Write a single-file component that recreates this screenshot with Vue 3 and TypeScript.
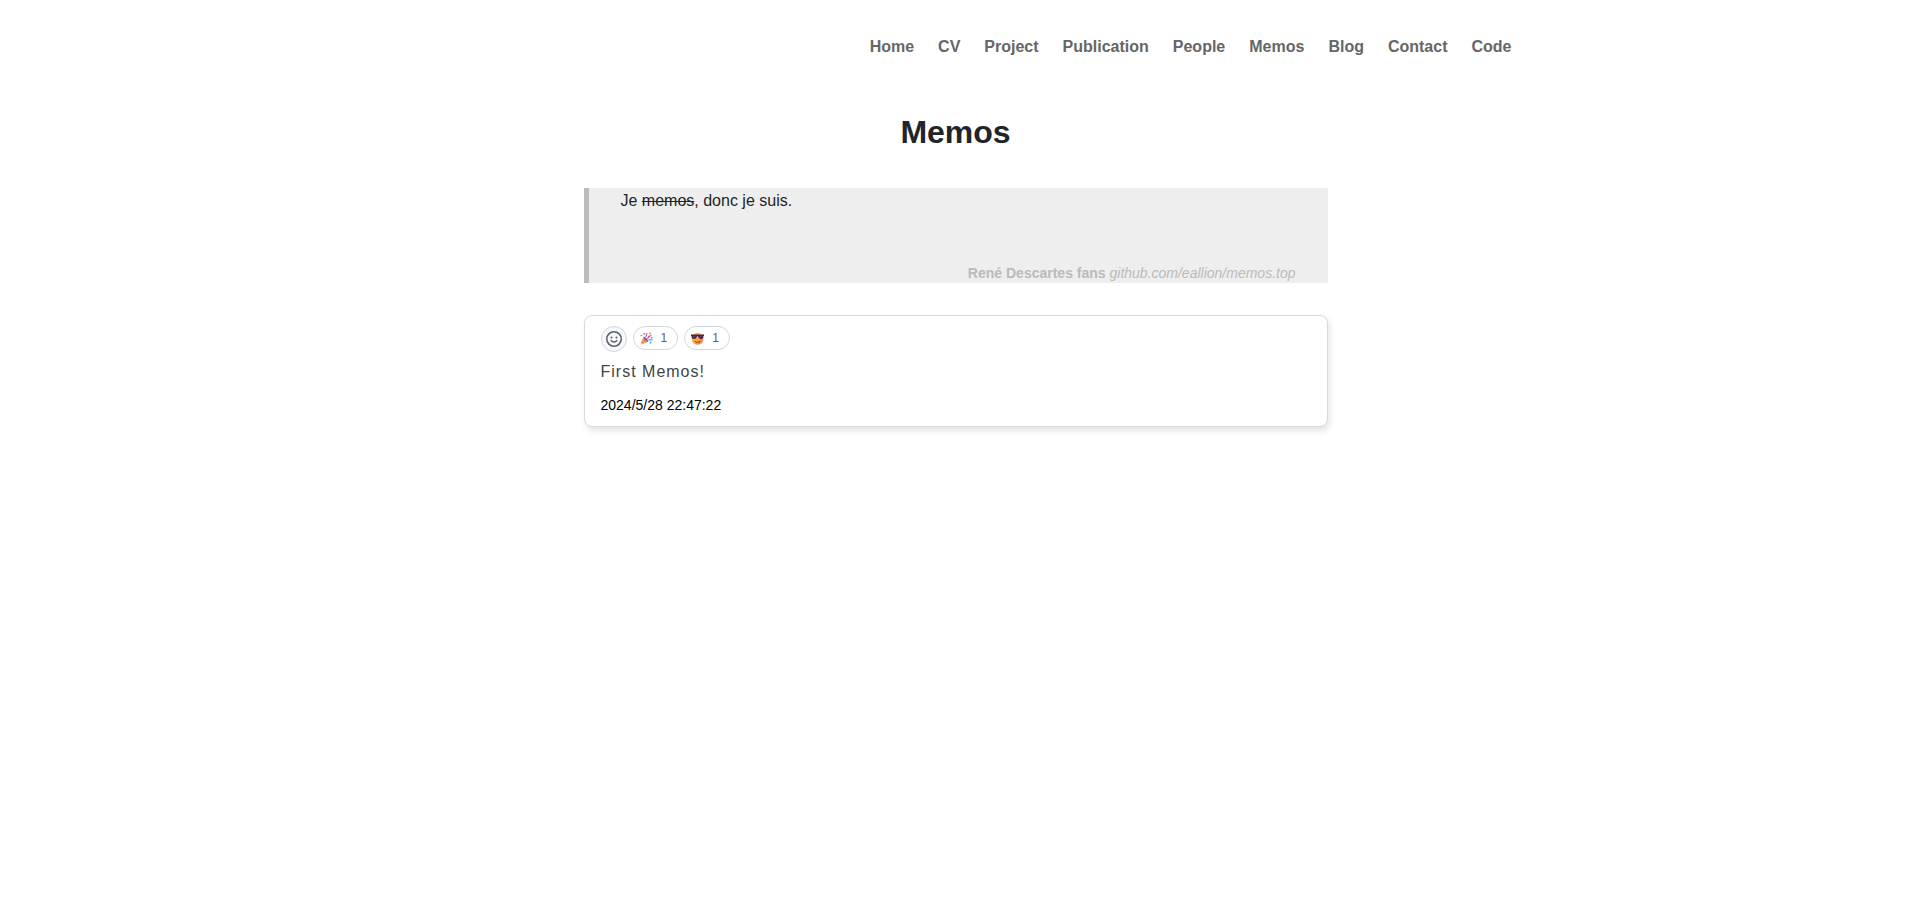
<script setup lang="ts">
interface Reaction {
  id: 'party' | 'cool'
  label: string
  count: number
}

const links: string[] = ['Home', 'CV', 'Project', 'Publication', 'People', 'Memos', 'Blog', 'Contact', 'Code']

const reactions: Reaction[] = [
  { id: 'party', label: 'Party popper', count: 1 },
  { id: 'cool', label: 'Smiling face with sunglasses', count: 1 },
]
</script>

<template>
  <div class="page">
    <header class="header">
      <nav class="nav" aria-label="Main">
        <a v-for="link in links" :key="link" class="nav-link" :href="'#' + link.toLowerCase()">{{ link }}</a>
      </nav>
    </header>

    <main class="content">
      <h1 class="title">Memos</h1>

      <blockquote class="quote">
        <p class="quote-text">Je <del>memos</del>, donc je suis.</p>
        <footer class="quote-source"><strong>René Descartes fans</strong> <cite>github.com/eallion/memos.top</cite></footer>
      </blockquote>

      <article class="memo">
        <div class="reactions">
          <button class="add" type="button" aria-label="Add reaction">
            <svg class="smiley" viewBox="0 0 16 16" aria-hidden="true">
              <circle cx="8" cy="8" r="7.25" fill="none" stroke="currentColor" stroke-width="1.5" />
              <circle cx="5.5" cy="6.5" r="1" fill="currentColor" />
              <circle cx="10.5" cy="6.5" r="1" fill="currentColor" />
              <path d="M5.2 9.6C6 10.6 7 11 8 11s2-.4 2.8-1.4" fill="none" stroke="currentColor" stroke-width="1.5" stroke-linecap="round" />
            </svg>
          </button>
          <button v-for="r in reactions" :key="r.id" class="pill" type="button" :aria-label="r.label + ' ' + r.count">
            <svg v-if="r.id === 'party'" class="emoji" viewBox="0 0 24 24" aria-hidden="true">
              <path d="M1 23 6 9c3 1 8 6 9 9Z" fill="#f9b233" />
              <path d="m3 18 4 3M5 13l6 6" stroke="#e0457b" stroke-width="1.600" />
              <path d="M6 9c2-1.500 10 5.500 9 9-3-.5-8-5-9-9Z" fill="#7b4fb5" />
              <path d="M10 9c3-2 1-4 3-7M13 12c4-1 3-5 8-6" fill="none" stroke="#e8409a" stroke-width="2.200" />
              <path d="M15 15c3-2 4 1 8-1" fill="none" stroke="#3c9df0" stroke-width="2.200" />
              <path d="M6 2h3v3H6Zm14 7h3v3h-3Zm-2 9h3v3h-3Z" fill="#40a8f5" />
              <path d="M1 5h3v3H1ZM17 1h3v3h-3Z" fill="#f08a35" />
              <path d="M15 7h2.500v2.500H15Z" fill="#e34f9a" />
            </svg>
            <svg v-else class="emoji" viewBox="0 0 24 24" aria-hidden="true">
              <defs>
                <linearGradient id="cool-face" x1="0" y1="0" x2="1" y2="1">
                  <stop offset="0" stop-color="#ffcf3e" />
                  <stop offset="0.55" stop-color="#fba82e" />
                  <stop offset="1" stop-color="#f25c62" />
                </linearGradient>
              </defs>
              <circle cx="12" cy="12.500" r="11" fill="url(#cool-face)" />
              <path d="M0 4.500h24v3h-1c0 4-1.500 5.500-4.500 5.500S13.500 11 13 8h-2c-.5 3-2.500 5-5.500 5S1 11.500 1 7.500H0Z" fill="#432353" />
              <path d="m4 10.500 3-3.500M16 10.500l3-3.500" stroke="#85609a" stroke-width="1.500" />
              <path d="M7.500 17.500c3 2 6 2 9 0" fill="none" stroke="#833c37" stroke-width="1.800" stroke-linecap="round" />
            </svg>
            <span class="count">{{ r.count }}</span>
          </button>
        </div>
        <p class="memo-text">First Memos!</p>
        <time class="memo-time" datetime="2024-05-28T22:47:22">2024/5/28 22:47:22</time>
      </article>
    </main>
  </div>
</template>

<style>
body {
  margin: 0;
  background: #fff;
}
</style>

<style scoped>
.page {
  box-sizing: border-box;
  min-height: 100vh;
  padding-bottom: 32px;
  font-family: "Liberation Sans", Arial, sans-serif;
  font-size: 16px;
  line-height: 24px;
  color: #212529;
}

.header {
  box-sizing: border-box;
  max-width: 1140px;
  margin: 0 auto;
  padding: 35px 14px 0;
}

.nav {
  display: flex;
  flex-wrap: wrap;
  justify-content: flex-end;
  gap: 24px;
}

.nav-link {
  font-weight: 700;
  color: #666;
  text-decoration: none;
}

.content {
  max-width: 744px;
  margin: 0 auto;
}

.title {
  margin: 53px 0 36px;
  font-size: 32px;
  line-height: 40px;
  font-weight: 700;
  text-align: center;
}

.quote {
  margin: 0 0 32px;
  padding: 1px 32px 0;
  border-left: 5px solid #bbb;
  background: #eee;
}

.quote-text {
  margin: 0 0 50px;
}

.quote-source {
  font-size: 14px;
  line-height: 20px;
  text-align: right;
  color: #bbb;
}

.memo {
  padding: 10px 16px;
  border: 1px solid #d9d9d9;
  border-radius: 8px;
  background: #fff;
  box-shadow: 2px 4px 6px rgba(0, 0, 0, 0.1);
}

.reactions {
  display: flex;
  align-items: flex-start;
  gap: 6px;
}

.add,
.pill {
  box-sizing: border-box;
  display: flex;
  align-items: center;
  border: 1px solid #d0d7de;
  font-family: inherit;
  cursor: pointer;
}

.add {
  justify-content: center;
  width: 26px;
  height: 26px;
  padding: 0;
  border-radius: 50%;
  background: #f6f8fa;
  color: #57606a;
}

.smiley {
  width: 16px;
  height: 16px;
}

.pill {
  gap: 8px;
  height: 24px;
  padding: 0 10px 0 6px;
  border-radius: 12px;
  background: #fff;
  color: #57606a;
}

.emoji {
  width: 13px;
  height: 13px;
}

.count {
  font-size: 12px;
  line-height: 18px;
}

.memo-text {
  margin: 8px 0 11px;
  letter-spacing: 1px;
  color: #444;
}

.memo-time {
  display: block;
  font-size: 14px;
  line-height: 21px;
  color: #000;
}
</style>
